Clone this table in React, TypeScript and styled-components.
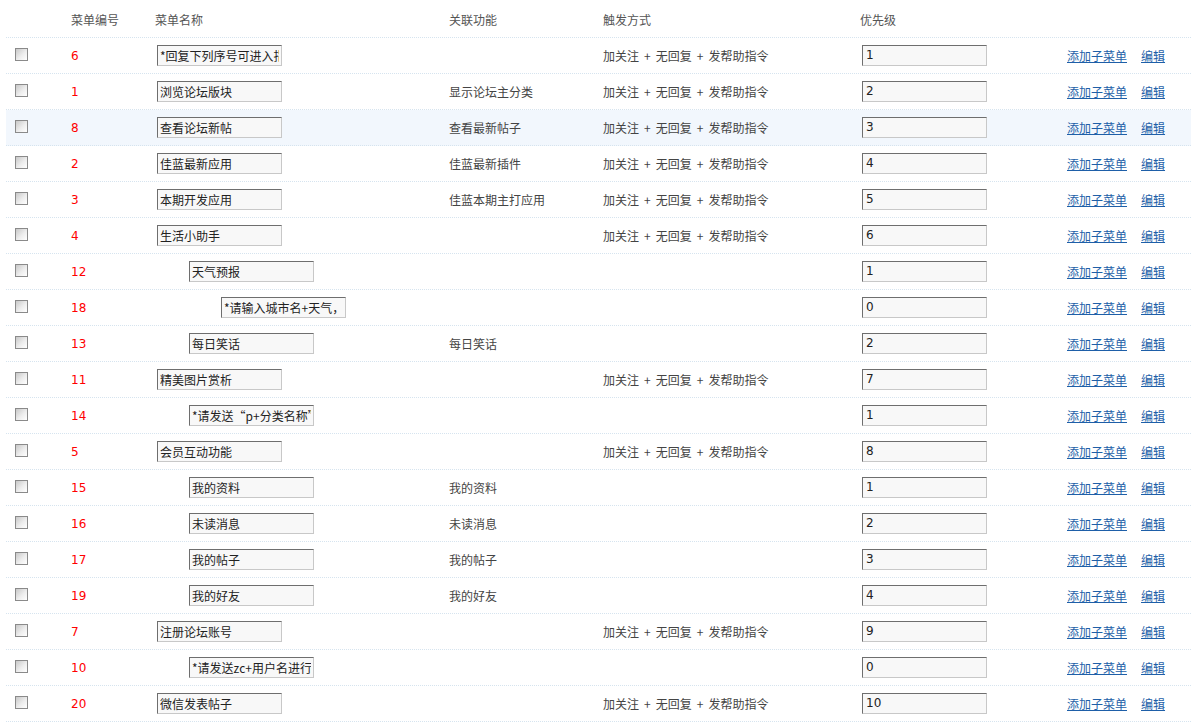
import React from "react";
import styled, { createGlobalStyle } from "styled-components";

const Global = createGlobalStyle`
  html, body { margin: 0; padding: 0; background: #fff; }
  body { font-family: "Noto Sans CJK SC", "Liberation Sans", sans-serif; font-size: 12px; color: #444; }
`;

const COLS = "57px 84px 294px 154px 257px 207px 1fr";

const Table = styled.div`
  margin-left: 6px;
  width: 1185px;
`;

const HeaderRow = styled.div`
  display: grid;
  grid-template-columns: ${COLS};
  height: 37px;
  align-items: center;
  border-bottom: 1px dotted #d6e4ef;
`;

const Row = styled.div<{ $hl?: boolean }>`
  display: grid;
  grid-template-columns: ${COLS};
  height: 35px;
  align-items: center;
  border-bottom: 1px dotted #d6e4ef;
  background: ${(p) => (p.$hl ? "#f2f7fd" : "transparent")};
`;

const Cell = styled.div<{ $pl?: number }>`
  padding-left: ${(p) => p.$pl ?? 8}px;
  white-space: nowrap;
  line-height: 16px;
`;

const CheckCell = styled.div`
  padding-left: 9px;
  display: flex;
  align-items: center;
  height: 35px;
`;

const HeadText = styled.span`
  color: #555;
  position: relative;
  top: 1px;
`;

const Check = styled.span`
  display: block;
  box-sizing: border-box;
  width: 13px;
  height: 13px;
  border: 1px solid #8a8a8a;
  background: linear-gradient(135deg, #c8c8c8 0%, #ededed 55%, #ffffff 100%);
  margin-top: -2px;
`;

const Num = styled.span`
  color: #f00;
  font-family: "DejaVu Sans", Verdana, sans-serif;
  font-size: 12px;
`;

const TextInput = styled.input<{ $indent: number }>`
  box-sizing: border-box;
  display: block;
  width: 125px;
  height: 21px;
  margin: -1px 0 0 ${(p) => 2 + p.$indent}px;
  padding: 0 2px;
  border-style: solid;
  border-width: 1px;
  border-color: #6e6e6e #c8c8c8 #c8c8c8 #6e6e6e;
  background: #f8f8f8;
  font-family: "Noto Sans CJK SC", "Liberation Sans", sans-serif;
  font-size: 12px;
  color: #222;
  outline: none;
`;

const PrioInput = styled(TextInput)`
  font-family: "DejaVu Sans", Verdana, sans-serif;
  font-size: 12px;
  padding-left: 3px;
`;

const Plus = styled.span`
  margin: 0 5px;
`;

const Links = styled.div`
  display: flex;
  gap: 14px;
  padding-left: 8px;
`;

const Link = styled.a`
  color: #1e5fa8;
  text-decoration: underline;
  cursor: pointer;
`;

type Item = {
  id: number;
  level: number;
  name: string;
  func: string;
  trig: boolean;
  prio: number;
  hl?: boolean;
};

const data: Item[] = [
  { id: 6, level: 0, name: "*回复下列序号可进入指定功能", func: "", trig: true, prio: 1 },
  { id: 1, level: 0, name: "浏览论坛版块", func: "显示论坛主分类", trig: true, prio: 2 },
  { id: 8, level: 0, name: "查看论坛新帖", func: "查看最新帖子", trig: true, prio: 3, hl: true },
  { id: 2, level: 0, name: "佳蓝最新应用", func: "佳蓝最新插件", trig: true, prio: 4 },
  { id: 3, level: 0, name: "本期开发应用", func: "佳蓝本期主打应用", trig: true, prio: 5 },
  { id: 4, level: 0, name: "生活小助手", func: "", trig: true, prio: 6 },
  { id: 12, level: 1, name: "天气预报", func: "", trig: false, prio: 1 },
  { id: 18, level: 2, name: "*请输入城市名+天气，如北京天气", func: "", trig: false, prio: 0 },
  { id: 13, level: 1, name: "每日笑话", func: "每日笑话", trig: false, prio: 2 },
  { id: 11, level: 0, name: "精美图片赏析", func: "", trig: true, prio: 7 },
  { id: 14, level: 1, name: "*请发送“p+分类名称”查看", func: "", trig: false, prio: 1 },
  { id: 5, level: 0, name: "会员互动功能", func: "", trig: true, prio: 8 },
  { id: 15, level: 1, name: "我的资料", func: "我的资料", trig: false, prio: 1 },
  { id: 16, level: 1, name: "未读消息", func: "未读消息", trig: false, prio: 2 },
  { id: 17, level: 1, name: "我的帖子", func: "我的帖子", trig: false, prio: 3 },
  { id: 19, level: 1, name: "我的好友", func: "我的好友", trig: false, prio: 4 },
  { id: 7, level: 0, name: "注册论坛账号", func: "", trig: true, prio: 9 },
  { id: 10, level: 1, name: "*请发送zc+用户名进行注册", func: "", trig: false, prio: 0 },
  { id: 20, level: 0, name: "微信发表帖子", func: "", trig: true, prio: 10 },
];

const Trigger = () => (
  <>
    加关注<Plus>+</Plus>无回复<Plus>+</Plus>发帮助指令
  </>
);

export default function App() {
  return (
    <>
      <Global />
      <Table>
        <HeaderRow>
          <Cell />
          <Cell><HeadText>菜单编号</HeadText></Cell>
          <Cell><HeadText>菜单名称</HeadText></Cell>
          <Cell><HeadText>关联功能</HeadText></Cell>
          <Cell><HeadText>触发方式</HeadText></Cell>
          <Cell><HeadText>优先级</HeadText></Cell>
          <Cell />
        </HeaderRow>
        {data.map((d) => (
          <Row key={d.id} $hl={d.hl}>
            <CheckCell><Check /></CheckCell>
            <Cell><Num>{d.id}</Num></Cell>
            <Cell>
              <TextInput $indent={d.level * 32} defaultValue={d.name} readOnly />
            </Cell>
            <Cell>{d.func}</Cell>
            <Cell>{d.trig ? <Trigger /> : null}</Cell>
            <Cell>
              <PrioInput $indent={0} defaultValue={String(d.prio)} readOnly />
            </Cell>
            <Links>
              <Link>添加子菜单</Link>
              <Link>编辑</Link>
            </Links>
          </Row>
        ))}
      </Table>
    </>
  );
}
